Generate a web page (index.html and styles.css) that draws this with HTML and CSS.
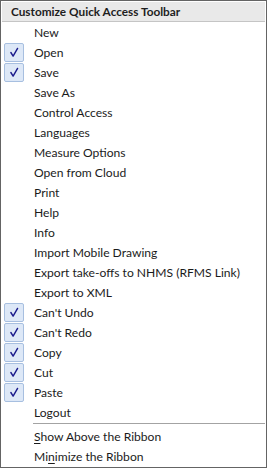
FILE: index.html
```html
<!DOCTYPE html>
<html lang="en">
<head>
  <meta charset="UTF-8">
  <title>Customize Quick Access Toolbar</title>
  <link rel="stylesheet" href="styles.css">
</head>
<body>
  <div class="menu">
    <div class="menu-head">Customize Quick Access Toolbar</div>
    <ul class="items">
      <li class="item"><span class="tick"></span><span class="label">New</span></li>
      <li class="item on"><span class="tick"><svg viewBox="0 0 20 19"><path d="M6.5 9.5 L9 13.5 L14 5"/></svg></span><span class="label">Open</span></li>
      <li class="item on"><span class="tick"><svg viewBox="0 0 20 19"><path d="M6.5 9.5 L9 13.5 L14 5"/></svg></span><span class="label">Save</span></li>
      <li class="item"><span class="tick"></span><span class="label">Save As</span></li>
      <li class="item"><span class="tick"></span><span class="label">Control Access</span></li>
      <li class="item"><span class="tick"></span><span class="label">Languages</span></li>
      <li class="item"><span class="tick"></span><span class="label">Measure Options</span></li>
      <li class="item"><span class="tick"></span><span class="label">Open from Cloud</span></li>
      <li class="item"><span class="tick"></span><span class="label">Print</span></li>
      <li class="item"><span class="tick"></span><span class="label">Help</span></li>
      <li class="item"><span class="tick"></span><span class="label">Info</span></li>
      <li class="item"><span class="tick"></span><span class="label">Import Mobile Drawing</span></li>
      <li class="item"><span class="tick"></span><span class="label">Export take-offs to NHMS (RFMS Link)</span></li>
      <li class="item"><span class="tick"></span><span class="label">Export to XML</span></li>
      <li class="item on"><span class="tick"><svg viewBox="0 0 20 19"><path d="M6.5 9.5 L9 13.5 L14 5"/></svg></span><span class="label">Can't Undo</span></li>
      <li class="item on"><span class="tick"><svg viewBox="0 0 20 19"><path d="M6.5 9.5 L9 13.5 L14 5"/></svg></span><span class="label">Can't Redo</span></li>
      <li class="item on"><span class="tick"><svg viewBox="0 0 20 19"><path d="M6.5 9.5 L9 13.5 L14 5"/></svg></span><span class="label">Copy</span></li>
      <li class="item on"><span class="tick"><svg viewBox="0 0 20 19"><path d="M6.5 9.5 L9 13.5 L14 5"/></svg></span><span class="label">Cut</span></li>
      <li class="item on"><span class="tick"><svg viewBox="0 0 20 19"><path d="M6.5 9.5 L9 13.5 L14 5"/></svg></span><span class="label">Paste</span></li>
      <li class="item"><span class="tick"></span><span class="label">Logout</span></li>
      <li class="sep"></li>
      <li class="item"><span class="tick"></span><span class="label"><u>S</u>how Above the Ribbon</span></li>
      <li class="item"><span class="tick"></span><span class="label">Mi<u>n</u>imize the Ribbon</span></li>
    </ul>
  </div>
</body>
</html>
```

FILE: styles.css
```css
body { margin:0; background:#fff; font-family:Lato, 'Noto Sans', Arial, sans-serif; }
.menu { width:267px; height:468px; border:1px solid #646464; padding:1px; box-sizing:border-box; background:#fff; }
.menu-head { height:19px; line-height:20px; background:#e9e9e9; border-bottom:1px solid #c5c5c5; padding-left:9px; font-size:11.8px; font-weight:bold; color:#1e1e1e; }
.items { list-style:none; margin:0; padding:0; }
.item { display:flex; align-items:center; height:20px; font-size:12.1px; color:#1b1b1b; }
.label { padding-top:1px; white-space:nowrap; }
.tick { width:20px; height:19px; margin:0 10px 0 2px; box-sizing:border-box; border-radius:2px; }
.item.on .tick { background:#dde8f7; border:1px solid #a7bfe0; }
.tick svg { display:block; width:18px; height:17px; }
.tick path { fill:none; stroke:#1b1b8c; stroke-width:1.6; stroke-linecap:round; stroke-linejoin:round; }
.label u { text-decoration-thickness:1px; text-underline-offset:2px; }
.sep { height:1px; background:#a3a3a3; margin:1px 0 2px 31px; }
```
